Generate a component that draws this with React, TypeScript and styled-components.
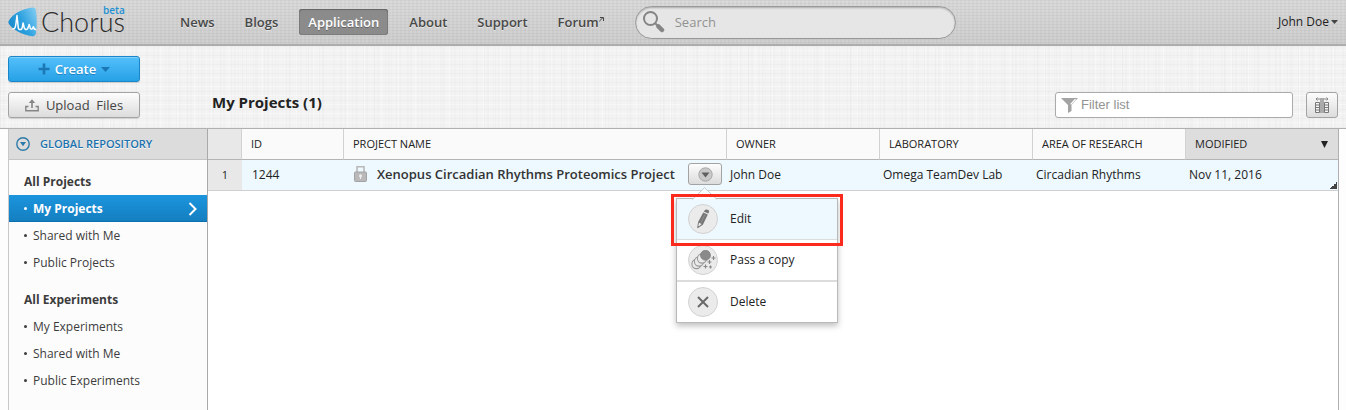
import React from "react";
import styled, { createGlobalStyle, css } from "styled-components";

const GlobalStyle = createGlobalStyle`
  *, *::before, *::after { box-sizing: border-box; }
  body {
    margin: 0;
    background: #fdfdfd;
    color: #222;
    font: 12px/18px "Open Sans", "Noto Sans", sans-serif;
  }
  button, input { font: inherit; color: inherit; }
  button { cursor: pointer; }
  a { color: inherit; text-decoration: none; }
  ul { list-style: none; margin: 0; padding: 0; }
  svg { display: block; flex: none; }
`;

const Page = styled.div`
  display: flex;
  flex-direction: column;
  min-height: 100vh;
`;

const TopBar = styled.header`
  display: flex;
  align-items: center;
  height: 46px;
  padding: 0 8px;
  border-bottom: 2px solid #adadad;
  background:
    repeating-linear-gradient(90deg, rgba(0, 0, 0, 0.025) 0 2px, transparent 2px 4px),
    repeating-linear-gradient(rgba(0, 0, 0, 0.03) 0 1px, transparent 1px 3px),
    linear-gradient(#dadada, #cfcfcf);
`;

const Logo = styled.a`
  position: relative;
  display: flex;
  align-items: center;
  gap: 4px;
  width: 163px;
  height: 44px;
`;

const LogoName = styled.span`
  font-family: Lato, "Open Sans", sans-serif;
  font-size: 27px;
  font-weight: 300;
  line-height: 40px;
  color: #2b2b2b;
`;

const BetaTag = styled.sup`
  position: absolute;
  top: 4px;
  left: 95px;
  font-size: 10px;
  font-weight: 600;
  line-height: 12px;
  color: #2191d3;
`;

const Nav = styled.nav`
  display: flex;
  gap: 12px;
`;

const NavLink = styled.a<{ $active?: boolean }>`
  display: flex;
  height: 26px;
  padding: 0 9px;
  border-radius: 3px;
  font-size: 13px;
  font-weight: 600;
  line-height: 26px;
  color: #484848;
  text-shadow: 0 1px 0 rgba(255, 255, 255, 0.5);
  ${(p) =>
    p.$active &&
    css`
      color: #fff;
      background: #8b8b8b;
      box-shadow: inset 0 1px 1px #666, inset 0 0 0 1px #7d7d7d;
      text-shadow: 0 1px 0 rgba(0, 0, 0, 0.3);
    `}
`;

const SearchBox = styled.label`
  display: flex;
  align-items: center;
  gap: 10px;
  width: 321px;
  height: 33px;
  margin-left: 22px;
  padding: 0 16px 0 7px;
  border: 1px solid #999;
  border-radius: 17px;
  background: #e6e6e6;
  box-shadow: inset 0 1px 2px rgba(0, 0, 0, 0.25);
`;

const PlainInput = styled.input`
  flex: 1;
  min-width: 0;
  padding: 0;
  border: 0;
  outline: 0;
  background: none;
  font-size: 13px;
  &::placeholder { color: #929292; opacity: 1; }
`;

const FilterInput = styled(PlainInput)`
  font-family: "Liberation Sans", sans-serif;
`;

const UserMenu = styled.button`
  display: flex;
  align-items: center;
  gap: 2px;
  margin-left: auto;
  padding: 0;
  border: 0;
  background: none;
`;

const Toolbar = styled.section`
  display: flex;
  align-items: flex-end;
  padding: 10px 8px;
  border-bottom: 1px solid #b0b0b0;
  background:
    repeating-linear-gradient(90deg, rgba(0, 0, 0, 0.016) 0 1px, transparent 1px 3px, rgba(0, 0, 0, 0.01) 3px 5px, transparent 5px 11px),
    repeating-linear-gradient(90deg, rgba(0, 0, 0, 0.012) 0 1px, transparent 1px 7px, rgba(255, 255, 255, 0.3) 7px 8px, transparent 8px 17px),
    repeating-linear-gradient(rgba(0, 0, 0, 0.018) 0 1px, transparent 1px 4px, rgba(255, 255, 255, 0.4) 4px 5px, transparent 5px 9px),
    #f3f3f3;
`;

const Actions = styled.div`
  display: flex;
  flex-direction: column;
  gap: 10px;
  width: 204px;
`;

const buttonBase = css`
  display: flex;
  align-items: center;
  justify-content: center;
  height: 26px;
  padding: 0;
  border-radius: 3px;
`;

const PushButton = styled.button<{ $primary?: boolean }>`
  ${buttonBase}
  gap: 7px;
  width: 132px;
  font-size: 13px;
  white-space: pre;
  ${(p) =>
    p.$primary
      ? css`
          gap: 5px;
          border: 1px solid #1b86c7;
          background: linear-gradient(#53bffb, #27a1e6);
          box-shadow: inset 0 1px 0 #7dd0ff, 0 1px 1px rgba(0, 0, 0, 0.15);
          color: #fff;
          font-weight: 600;
          text-shadow: 0 1px 0 rgba(0, 70, 130, 0.4);
        `
      : css`
          border: 1px solid #a3a3a3;
          background: linear-gradient(#fdfdfd, #dcdcdc);
          box-shadow: 0 1px 1px rgba(0, 0, 0, 0.12);
          color: #444;
        `}
`;

const ColumnsButton = styled.button`
  ${buttonBase}
  width: 32px;
  margin-left: 13px;
  border: 1px solid #a3a3a3;
  background: linear-gradient(#fdfdfd, #dcdcdc);
`;

const Title = styled.h1`
  flex: 1;
  margin: 0;
  font-size: 15px;
  font-weight: 700;
  line-height: 32px;
  color: #222;
`;

const FilterBox = styled.label`
  display: flex;
  align-items: center;
  gap: 3px;
  width: 238px;
  height: 26px;
  padding: 0 5px;
  border: 1px solid #ababab;
  border-radius: 3px;
  background: #fff;
`;

const Workspace = styled.main`
  display: flex;
  flex: 1;
  padding: 0 7px 0 8px;
`;

const Sidebar = styled.aside`
  flex: none;
  width: 200px;
  border: solid #c8c8c8;
  border-width: 0 1px;
  border-right-color: #a9a9a9;
  background: #fcfcfc;
`;

const RepositoryHeader = styled.button`
  display: flex;
  align-items: center;
  gap: 10px;
  width: 100%;
  height: 31px;
  padding: 0 7px;
  border: 0;
  border-bottom: 1px solid #c4c4c4;
  background: #dcdcdc;
  font-size: 11px;
  font-weight: 600;
  color: #1b72ad;
  text-shadow: 0 1px 0 #fff;
`;

const Group = styled.section`
  padding-top: 8px;
  padding-bottom: 2px;
`;

const GroupTitle = styled.h2`
  margin: 0;
  padding: 0 15px;
  font-size: 12px;
  font-weight: 700;
  line-height: 27px;
  color: #3c3c3c;
`;

const SideLink = styled.a<{ $active?: boolean }>`
  display: flex;
  align-items: center;
  height: 27px;
  padding: 0 10px 0 15px;
  color: #3c3c3c;
  &::before {
    content: "";
    width: 3px;
    height: 3px;
    margin-right: 6px;
    border-radius: 50%;
    background: currentColor;
  }
  svg { margin-left: auto; }
  ${(p) =>
    p.$active &&
    css`
      background: linear-gradient(#1c95de, #137ebf);
      box-shadow: inset 0 -1px 0 #0d70b0;
      color: #fff;
      font-weight: 700;
    `}
`;

const Content = styled.section`
  flex: 1;
  min-width: 0;
  border-right: 1px solid #b0b0b0;
  background: #fff;
`;

const Grid = styled.table`
  width: 100%;
  table-layout: fixed;
  border-collapse: separate;
  border-spacing: 0;
`;

const Col = styled.col<{ $width?: number }>`
  ${(p) => p.$width && `width: ${p.$width}px;`}
`;

const HeadCell = styled.th<{ $tone?: string }>`
  height: 31px;
  padding: 0 10px 0 9px;
  border-right: 1px solid #d2d2d2;
  border-bottom: 1px solid #b4b4b4;
  background: ${(p) => p.$tone || "#fafafa"};
  font-size: 11px;
  font-weight: 400;
  text-align: left;
  white-space: nowrap;
  &:last-child { border-right: 0; }
`;

const Sort = styled.span`
  display: flex;
  align-items: center;
  justify-content: space-between;
`;

const RowNumber = styled.th`
  padding: 0;
  border-bottom: 1px solid #d0d0d0;
  background: #e8e8e8;
  font-size: 11px;
  font-weight: 400;
  text-align: center;
`;

const Cell = styled.td<{ $wide?: boolean }>`
  position: relative;
  height: 31px;
  padding: 0 5px 0 ${(p) => (p.$wide ? 10 : 3)}px;
  border-bottom: 1px solid #d0d0d0;
  background: #edf8ff;
  white-space: nowrap;
`;

const ResizeCorner = styled.span`
  position: absolute;
  right: 1px;
  bottom: 1px;
  width: 7px;
  height: 7px;
  background: linear-gradient(135deg, transparent 50%, #444 50%);
`;

const Project = styled.div`
  display: flex;
  align-items: center;
  gap: 10px;
  padding-bottom: 2px;
`;

const ProjectName = styled.strong`
  flex: 1;
  font-size: 13px;
  font-weight: 600;
  color: #333;
`;

const MenuAnchor = styled.div`
  position: relative;
`;

const MenuButton = styled.button`
  ${buttonBase}
  width: 34px;
  height: 22px;
  border: 1px solid #a3a3a3;
  background: linear-gradient(#fdfdfd, #dcdcdc);
`;

const Menu = styled.div`
  position: absolute;
  top: 35px;
  left: -12px;
  z-index: 1;
  width: 162px;
  border: 1px solid #b9b9b9;
  background: #fff;
  box-shadow: 0 3px 6px rgba(0, 0, 0, 0.25);
`;

const MenuPointer = styled.svg`
  position: absolute;
  z-index: 1;
  top: -12px;
  left: 15px;
`;

const MenuItem = styled.button<{ $current?: boolean; $divider?: number }>`
  position: relative;
  display: flex;
  align-items: center;
  gap: 12px;
  width: 100%;
  height: ${(p) => 40 + (p.$divider || 0)}px;
  padding: 0 11px;
  border: 0;
  border-bottom: ${(p) => p.$divider || 0}px solid #dcdcdc;
  background: ${(p) => (p.$current ? "#edf8ff" : "#fff")};
`;

const Badge = styled.span`
  display: grid;
  place-items: center;
  width: 30px;
  height: 30px;
  border: 1px solid #d2d2d2;
  border-radius: 50%;
  background: #ebebeb;
`;

const Highlight = styled.span`
  position: absolute;
  z-index: 2;
  inset: -5px -6px -7px;
  border: 3px solid #fb2a1d;
  pointer-events: none;
`;

const Caret = ({ w, h, fill }: { w: number; h: number; fill: string }) => (
  <svg width={w} height={h} viewBox="0 0 10 6" preserveAspectRatio="none" aria-hidden="true">
    <path d="M0 0h10L5 6z" fill={fill} />
  </svg>
);

const LogoMark = () => (
  <svg width="29" height="30" viewBox="0 0 29 30" aria-hidden="true">
    <defs>
      <linearGradient id="mark" x1="0" y1="0.7" x2="1" y2="0.2">
        <stop offset="0" stopColor="#1788cb" />
        <stop offset="0.5" stopColor="#2ea2e0" />
        <stop offset="1" stopColor="#7cc9f0" />
      </linearGradient>
    </defs>
    <path d="M1 13.5C5 7 14 2 24 .6q3.500-.5 4 3Q29.500 15 28 26q-.6 3.500-4 3.200C14 27.500 5 23 1 17q-1.200-1.800 0-3.500z" fill="url(#mark)" />
    <path d="M4.500 22q2.800 0 3.200-3.500L9 8.500l1.300 12.500q.4 2 2.700 1.500 1.300-.4 1.600-4l.5-2.500 1.200 5q.7 2 2.700 1.200 1-.4 1.600-3l.6-1.800 1 3.500q.6 1.600 2 1 .8-.4 1.100-2.200.8 3 3 3" fill="none" stroke="#fff" strokeWidth="1.500" strokeLinejoin="round" />
  </svg>
);

const SearchIcon = () => (
  <svg width="22" height="22" viewBox="0 0 22 22" fill="none" stroke="#858585" aria-hidden="true">
    <circle cx="7.500" cy="7.500" r="6.500" strokeWidth="2" />
    <path d="M12.200 12.200l2.500 2.500" strokeWidth="2" />
    <path d="M15.500 15.500l3.500 3.500" strokeWidth="4.500" strokeLinecap="round" />
  </svg>
);

const UploadIcon = () => (
  <svg width="14" height="13" viewBox="0 0 14 13" aria-hidden="true">
    <path d="M3.500 7.500H.8v4.200h12.400V7.500h-2.700" fill="none" stroke="#858585" strokeWidth="1.400" />
    <path d="M7 9V2.500" stroke="#858585" strokeWidth="1.600" />
    <path d="M3.800 4L7 .3 10.200 4z" fill="#858585" />
  </svg>
);

const FunnelIcon = () => (
  <svg width="17" height="15" viewBox="0 0 17 15" aria-hidden="true">
    <path d="M0 0h17l-6.500 7v6L7 15V7z" fill="#a3a3a3" />
    <path d="M14.500 1.200L9.700 6.400" stroke="#fff" strokeWidth="1.300" />
  </svg>
);

const ColumnsIcon = () => (
  <svg width="14" height="16" viewBox="0 0 14 16" aria-hidden="true">
    <path d="M1 2h12M2.500.5L1 2l1.500 1.500M11.500.5L13 2l-1.500 1.500" fill="none" stroke="#858585" />
    <path d="M5 1h4v15H5z" fill="#aaa" />
    <path d="M.5 5.500h4v10h-4zM9.500 5.500h4v10h-4zM.5 8h4m-4 2.500h4M.5 13h4M9.500 8h4m-4 2.500h4m-4 2.500h4" fill="#f5f5f5" stroke="#777" />
  </svg>
);

const LockIcon = () => (
  <svg width="13" height="16" viewBox="0 0 13 16" aria-hidden="true">
    <path d="M3 7V.8h7V7" fill="none" stroke="#b8b8b8" strokeWidth="1.600" />
    <rect x=".5" y="6" width="12" height="9.500" rx="1" fill="#b9b9b9" stroke="#a3a3a3" />
    <circle cx="6.500" cy="9.800" r="1.500" fill="#eee" />
    <path d="M6.500 10v3" stroke="#eee" strokeWidth="1.200" />
  </svg>
);

const RoundCaretIcon = () => (
  <svg width="15" height="15" viewBox="0 0 15 15" aria-hidden="true">
    <circle cx="7.500" cy="7.500" r="6.700" fill="#c9c9c9" stroke="#a8a8a8" />
    <path d="M3.500 5.500h8l-4 5z" fill="#606060" />
  </svg>
);

const RepositoryIcon = () => (
  <svg width="14" height="14" viewBox="0 0 14 14" aria-hidden="true">
    <circle cx="7" cy="7" r="6.200" fill="none" stroke="#2c7aa9" strokeWidth="1.400" />
    <path d="M4 5h6L7 9.200z" fill="#2c7aa9" />
  </svg>
);

const PencilIcon = () => (
  <svg width="14" height="20" viewBox="0 0 14 20" aria-hidden="true">
    <path d="M8.300 1.800Q10-.2 12.600 1.200q.8.8.2 2.300l-.6 1.100-4.500-2z" fill="#777" />
    <path d="M7.200 3.500l4.600 2.100-4.900 10.200-5.200 3.500-.5-.4.900-6z" fill="#777" />
    <path d="M2.900 13.700l2.800 1.300-2.700 2.300-.6-.3z" fill="#eee" />
    <path d="M9 5.500L4.800 14" stroke="#949494" strokeWidth=".8" />
  </svg>
);

const CopyIcon = () => (
  <svg width="26" height="20" viewBox="0 0 26 20" aria-hidden="true">
    <g fill="#ebebeb" stroke="#999" strokeWidth="1.100">
      <circle cx="6.500" cy="14" r="4.600" />
      <circle cx="9" cy="11.500" r="4.600" />
      <circle cx="12" cy="8.500" r="4.600" />
    </g>
    <circle cx="15.500" cy="5.300" r="5" fill="#8a8a8a" stroke="#777" strokeWidth=".6" />
    <path d="M23.500 6v4m-2-2h4M19.500 10v4m-2-2h4M15.500 14.500v4m-2-2h4M20.500 15.500v3m-1.500-1.500h3" stroke="#888" strokeWidth="1.100" />
  </svg>
);

const navItems = ["News", "Blogs", "Application", "About", "Support", "Forum"];

const groups = [
  { title: "All Projects", links: ["My Projects", "Shared with Me", "Public Projects"] },
  { title: "All Experiments", links: ["My Experiments", "Shared with Me", "Public Experiments"] },
];

export default function App() {
  return (
    <Page>
      <GlobalStyle />
      <TopBar>
        <Logo href="#">
          <LogoMark />
          <LogoName>Chorus</LogoName>
          <BetaTag>beta</BetaTag>
        </Logo>
        <Nav>
          {navItems.map((item) => (
            <NavLink key={item} href="#" $active={item === "Application"}>
              {item}
              {item === "Forum" && (
                <svg width="5" height="13" viewBox="0 0 5 13" fill="none" stroke="#444" aria-hidden="true">
                  <path d="M.3 12.200L4 8.500M1 8.500h3.500V12" />
                </svg>
              )}
            </NavLink>
          ))}
        </Nav>
        <SearchBox>
          <SearchIcon />
          <PlainInput placeholder="Search" aria-label="Search" />
        </SearchBox>
        <UserMenu type="button">
          John Doe <Caret w={7} h={4} fill="#444" />
        </UserMenu>
      </TopBar>

      <Toolbar>
        <Actions>
          <PushButton type="button" $primary>
            <svg width="12" height="12" viewBox="0 0 12 12" aria-hidden="true">
              <path d="M6 .5v11M.5 6h11" stroke="#1c78b5" strokeWidth="2.600" />
            </svg>
            Create
            <Caret w={9} h={5} fill="#1c78b5" />
          </PushButton>
          <PushButton type="button">
            <UploadIcon />
            {"Upload  Files"}
          </PushButton>
        </Actions>
        <Title>My Projects (1)</Title>
        <FilterBox>
          <FunnelIcon />
          <FilterInput placeholder="Filter list" aria-label="Filter list" />
        </FilterBox>
        <ColumnsButton type="button" aria-label="Columns">
          <ColumnsIcon />
        </ColumnsButton>
      </Toolbar>

      <Workspace>
        <Sidebar>
          <RepositoryHeader type="button">
            <RepositoryIcon />
            GLOBAL REPOSITORY
          </RepositoryHeader>
          {groups.map((group) => (
            <Group key={group.title}>
              <GroupTitle>{group.title}</GroupTitle>
              <ul>
                {group.links.map((link) => (
                  <li key={link}>
                    <SideLink href="#" $active={link === "My Projects"}>
                      {link}
                      {link === "My Projects" && (
                        <svg width="9" height="14" viewBox="0 0 9 14" aria-hidden="true">
                          <path d="M1.500 1l6 6-6 6" fill="none" stroke="#fff" strokeWidth="2" />
                        </svg>
                      )}
                    </SideLink>
                  </li>
                ))}
              </ul>
            </Group>
          ))}
        </Sidebar>

        <Content>
          <Grid>
            <colgroup>
              <Col $width={34} />
              <Col $width={102} />
              <Col />
              <Col $width={153} />
              <Col $width={153} />
              <Col $width={153} />
              <Col $width={152} />
            </colgroup>
            <thead>
              <tr>
                <HeadCell $tone="#e8e8e8" aria-label="Row" />
                <HeadCell>ID</HeadCell>
                <HeadCell>PROJECT NAME</HeadCell>
                <HeadCell>OWNER</HeadCell>
                <HeadCell>LABORATORY</HeadCell>
                <HeadCell>AREA OF RESEARCH</HeadCell>
                <HeadCell $tone="#dddddd">
                  <Sort>
                    MODIFIED <Caret w={7} h={7} fill="#222" />
                  </Sort>
                </HeadCell>
              </tr>
            </thead>
            <tbody>
              <tr>
                <RowNumber scope="row">1</RowNumber>
                <Cell $wide>1244</Cell>
                <Cell $wide>
                  <Project>
                    <LockIcon />
                    <ProjectName>Xenopus Circadian Rhythms Proteomics Project</ProjectName>
                    <MenuAnchor>
                      <MenuButton type="button" aria-label="Project actions">
                        <RoundCaretIcon />
                      </MenuButton>
                      <Menu>
                        <MenuPointer width="26" height="13" viewBox="0 0 26 13" aria-hidden="true">
                          <path d="M.5 12.500L12.500.7 25 12.500" fill="#f8fcff" stroke="#c4ccd1" />
                        </MenuPointer>
                        <MenuItem type="button" $current $divider={1}>
                          <Badge>
                            <PencilIcon />
                          </Badge>
                          Edit
                          <Highlight />
                        </MenuItem>
                        <MenuItem type="button" $divider={2}>
                          <Badge>
                            <CopyIcon />
                          </Badge>
                          Pass a copy
                        </MenuItem>
                        <MenuItem type="button">
                          <Badge>
                            <svg width="12" height="12" viewBox="0 0 12 12" aria-hidden="true">
                              <path d="M1 1l10 10M11 1L1 11" stroke="#6a6a6a" strokeWidth="2" />
                            </svg>
                          </Badge>
                          Delete
                        </MenuItem>
                      </Menu>
                    </MenuAnchor>
                  </Project>
                </Cell>
                <Cell>John Doe</Cell>
                <Cell>Omega TeamDev Lab</Cell>
                <Cell>Circadian Rhythms</Cell>
                <Cell>
                  Nov 11, 2016
                  <ResizeCorner />
                </Cell>
              </tr>
            </tbody>
          </Grid>
        </Content>
      </Workspace>
    </Page>
  );
}
